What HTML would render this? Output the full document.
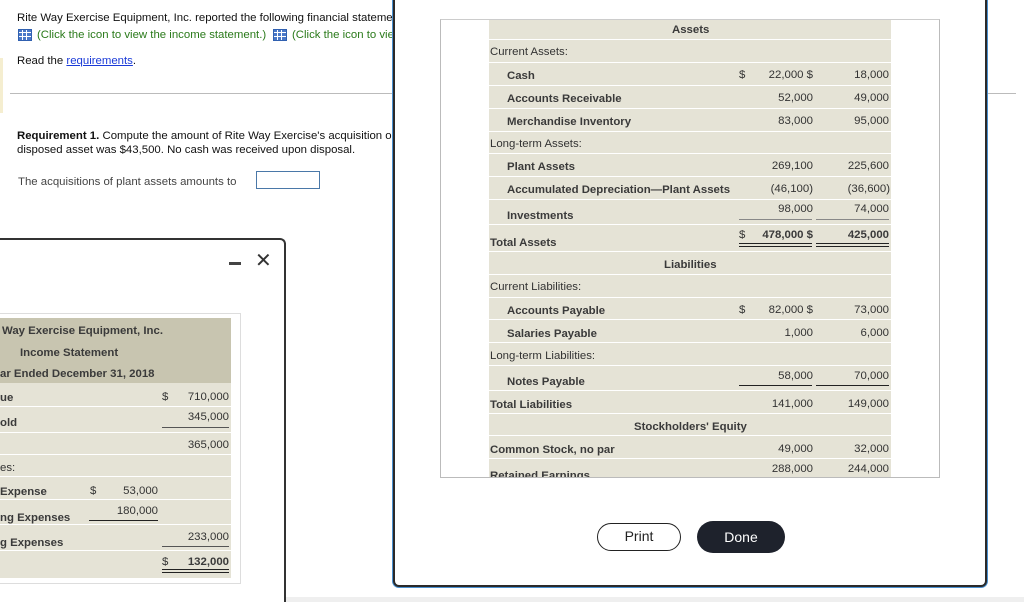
<!DOCTYPE html>
<html style="overflow:hidden;width:1024px;height:602px"><head><meta charset="utf-8"><style>
*{margin:0;padding:0;box-sizing:border-box}
body{width:1024px;height:602px;position:relative;overflow:hidden;background:#fff;font-family:"Liberation Sans",Arial,sans-serif;color:#222}
.t{position:absolute;white-space:nowrap;font-size:11.4px;line-height:14px}
.b{font-weight:bold;color:#3a3a3a}
.r{text-align:right}
.n{color:#333}
.row{position:absolute;background:#e5e3d6;border-bottom:1px solid #fff}
.ul{position:absolute;height:1px;background:#555}
.dul{position:absolute;height:4px;border-top:1px solid #222;border-bottom:1px solid #222}
.wl{position:absolute;left:489px;width:402px;height:1px;background:#fff}
.ic{position:absolute;width:14px;height:12px;border:1px solid #3060b0;background:#4a78c8;background-image:linear-gradient(90deg,transparent 3px,#fff 3px,#fff 4px,transparent 4px,transparent 7px,#fff 7px,#fff 8px,transparent 8px),linear-gradient(transparent 2px,#fff 2px,#fff 3px,transparent 3px,transparent 6px,#fff 6px,#fff 7px,transparent 7px)}
</style></head><body>
<div class="t" style="left:17px;top:11px;color:#111">Rite Way Exercise Equipment, Inc. reported the following financial stateme</div>
<div class="ic" style="left:18px;top:29px"></div>
<div class="t" style="left:37px;top:28px;color:#2a7a1a">(Click the icon to view the income statement.)</div>
<div class="ic" style="left:273px;top:29px"></div>
<div class="t" style="left:292px;top:28px;color:#2a7a1a">(Click the icon to vie</div>
<div class="t" style="left:17px;top:54px;color:#111">Read the <span style="color:#1a3ad8;text-decoration:underline">requirements</span>.</div>
<div style="position:absolute;left:0;top:58px;width:3px;height:55px;background:#f5eed0"></div>
<div style="position:absolute;left:10px;top:93px;width:383px;height:1px;background:#bbb"></div>
<div style="position:absolute;left:988px;top:93px;width:28px;height:1px;background:#bbb"></div>
<div class="t" style="left:17px;top:129px;color:#111"><b>Requirement 1.</b> Compute the amount of Rite Way Exercise's acquisition o</div>
<div class="t" style="left:17px;top:143px;color:#111">disposed asset was $43,500. No cash was received upon disposal.</div>
<div class="t" style="left:18px;top:175px;color:#444">The acquisitions of plant assets amounts to</div>
<div style="position:absolute;left:256px;top:171px;width:64px;height:18px;border:1px solid #4a78a8"></div>
<div style="position:absolute;left:0;top:597px;width:1024px;height:5px;background:#efefef"></div>

<!-- left modal -->
<div style="position:absolute;left:-10px;top:238px;width:296px;height:364px;border:2px solid #333;border-bottom:none;border-radius:6px 6px 0 0;background:#fff"></div>
<div style="position:absolute;left:229px;top:262px;width:12px;height:3px;background:#444"></div>
<div class="t" style="left:255px;top:250px;font-size:20px;line-height:22px;color:#333">✕</div>
<div style="position:absolute;left:0;top:313px;width:241px;height:271px;border:1px solid #ddd;border-left:none"></div>
<div style="position:absolute;left:0;top:318px;width:231px;height:65px;background:#c8c5b0"></div>
<div class="row" style="left:0;top:383px;width:231px;height:24px"></div>
<div class="row" style="left:0;top:407px;width:231px;height:26px"></div>
<div class="row" style="left:0;top:433px;width:231px;height:22px"></div>
<div class="row" style="left:0;top:455px;width:231px;height:22px"></div>
<div class="row" style="left:0;top:477px;width:231px;height:23px"></div>
<div class="row" style="left:0;top:500px;width:231px;height:25px"></div>
<div class="row" style="left:0;top:525px;width:231px;height:26px"></div>
<div class="row" style="left:0;top:551px;width:231px;height:27px;border:none"></div>
<div class="t b" style="left:2px;top:324px">Way Exercise Equipment, Inc.</div>
<div class="t b" style="left:20px;top:346px">Income Statement</div>
<div class="t b" style="left:0;top:367px">ar Ended December 31, 2018</div>
<div class="t b" style="left:0;top:391px">ue</div>
<div class="t n" style="left:162px;top:390px">$</div><div class="t n r" style="left:170px;width:59px;top:390px">710,000</div>
<div class="t b" style="left:0;top:416px">old</div>
<div class="t n r" style="left:170px;width:59px;top:410px">345,000</div><div class="ul" style="left:162px;top:427px;width:67px"></div>
<div class="t n r" style="left:170px;width:59px;top:438px">365,000</div>
<div class="t n" style="left:0;top:461px">es:</div>
<div class="t b" style="left:0;top:485px">Expense</div>
<div class="t n" style="left:90px;top:484px">$</div><div class="t n r" style="left:100px;width:58px;top:484px">53,000</div>
<div class="t b" style="left:0;top:511px">ng Expenses</div>
<div class="t n r" style="left:100px;width:58px;top:504px">180,000</div><div class="ul" style="left:89px;top:520px;width:69px;background:#222"></div>
<div class="t b" style="left:0;top:536px">g Expenses</div>
<div class="t n r" style="left:170px;width:59px;top:530px">233,000</div><div class="ul" style="left:162px;top:546px;width:67px"></div>
<div class="t n" style="left:162px;top:555px">$</div><div class="t b r" style="left:170px;width:59px;top:555px">132,000</div>
<div class="dul" style="left:162px;top:569px;width:67px"></div>

<!-- right modal -->
<div style="position:absolute;left:393px;top:-10px;width:594px;height:597px;border:2px solid #2a2a2a;border-radius:6px;background:#fff;box-shadow:0 0 0 1px #4a90d0"></div>
<div style="position:absolute;left:440px;top:19px;width:500px;height:459px;border:1px solid #bbb;border-top:1px solid #ccc"></div>
<div style="position:absolute;left:489px;top:20px;width:402px;height:457px;background:#e5e3d6"></div>
<div class="wl" style="top:39px"></div><div class="wl" style="top:62px"></div><div class="wl" style="top:85px"></div>
<div class="wl" style="top:108px"></div><div class="wl" style="top:131px"></div><div class="wl" style="top:153px"></div>
<div class="wl" style="top:176px"></div><div class="wl" style="top:199px"></div><div class="wl" style="top:224px"></div>
<div class="wl" style="top:251px"></div><div class="wl" style="top:274px"></div><div class="wl" style="top:297px"></div>
<div class="wl" style="top:319px"></div><div class="wl" style="top:342px"></div><div class="wl" style="top:365px"></div>
<div class="wl" style="top:390px"></div><div class="wl" style="top:413px"></div><div class="wl" style="top:435px"></div>
<div class="wl" style="top:458px"></div>

<div class="t b" style="left:672px;top:23px">Assets</div>
<div class="t n" style="left:490px;top:45px">Current Assets:</div>
<div class="t b" style="left:507px;top:69px">Cash</div>
<div class="t n" style="left:739px;top:68px">$</div><div class="t n r" style="left:745px;width:68px;top:68px">22,000 $</div><div class="t n r" style="left:830px;width:59px;top:68px">18,000</div>
<div class="t b" style="left:507px;top:92px">Accounts Receivable</div>
<div class="t n r" style="left:750px;width:63px;top:91px">52,000</div><div class="t n r" style="left:830px;width:59px;top:91px">49,000</div>
<div class="t b" style="left:507px;top:115px">Merchandise Inventory</div>
<div class="t n r" style="left:750px;width:63px;top:114px">83,000</div><div class="t n r" style="left:830px;width:59px;top:114px">95,000</div>
<div class="t n" style="left:490px;top:137px">Long-term Assets:</div>
<div class="t b" style="left:507px;top:160px">Plant Assets</div>
<div class="t n r" style="left:750px;width:63px;top:159px">269,100</div><div class="t n r" style="left:830px;width:59px;top:159px">225,600</div>
<div class="t b" style="left:507px;top:183px">Accumulated Depreciation—Plant Assets</div>
<div class="t n r" style="left:750px;width:63px;top:182px">(46,100)</div><div class="t n r" style="left:830px;width:60px;top:182px">(36,600)</div>
<div class="t b" style="left:507px;top:209px">Investments</div>
<div class="t n r" style="left:750px;width:63px;top:202px">98,000</div><div class="t n r" style="left:830px;width:59px;top:202px">74,000</div>
<div class="ul" style="left:739px;top:219px;width:73px;background:#888"></div><div class="ul" style="left:816px;top:219px;width:73px;background:#888"></div>
<div class="t b" style="left:490px;top:236px">Total Assets</div>
<div class="t n" style="left:739px;top:228px">$</div><div class="t b r" style="left:745px;width:68px;top:228px">478,000 $</div><div class="t b r" style="left:830px;width:59px;top:228px">425,000</div>
<div class="dul" style="left:739px;top:243px;width:73px"></div><div class="dul" style="left:816px;top:243px;width:73px"></div>
<div class="t b" style="left:664px;top:258px">Liabilities</div>
<div class="t n" style="left:490px;top:280px">Current Liabilities:</div>
<div class="t b" style="left:507px;top:304px">Accounts Payable</div>
<div class="t n" style="left:739px;top:303px">$</div><div class="t n r" style="left:745px;width:68px;top:303px">82,000 $</div><div class="t n r" style="left:830px;width:59px;top:303px">73,000</div>
<div class="t b" style="left:507px;top:327px">Salaries Payable</div>
<div class="t n r" style="left:750px;width:63px;top:326px">1,000</div><div class="t n r" style="left:830px;width:59px;top:326px">6,000</div>
<div class="t n" style="left:490px;top:349px">Long-term Liabilities:</div>
<div class="t b" style="left:507px;top:375px">Notes Payable</div>
<div class="t n r" style="left:750px;width:63px;top:369px">58,000</div><div class="t n r" style="left:830px;width:59px;top:369px">70,000</div>
<div class="ul" style="left:739px;top:385px;width:73px;background:#222"></div><div class="ul" style="left:816px;top:385px;width:73px;background:#222"></div>
<div class="t b" style="left:490px;top:398px">Total Liabilities</div>
<div class="t n r" style="left:750px;width:63px;top:397px">141,000</div><div class="t n r" style="left:830px;width:59px;top:397px">149,000</div>
<div class="t b" style="left:634px;top:420px">Stockholders' Equity</div>
<div class="t b" style="left:490px;top:443px">Common Stock, no par</div>
<div class="t n r" style="left:750px;width:63px;top:442px">49,000</div><div class="t n r" style="left:830px;width:59px;top:442px">32,000</div>
<div style="position:absolute;left:489px;top:459px;width:402px;height:18px;overflow:hidden">
<div class="t b" style="left:1px;top:10px">Retained Earnings</div>
<div class="t n r" style="left:261px;width:63px;top:3px">288,000</div><div class="t n r" style="left:341px;width:59px;top:3px">244,000</div>
</div>
<div style="position:absolute;left:597px;top:523px;width:84px;height:28px;border:1.5px solid #222;border-radius:14px;font-size:14px;line-height:25px;text-align:center;color:#222">Print</div>
<div style="position:absolute;left:697px;top:521px;width:88px;height:32px;background:#1e222c;border-radius:16px;font-size:14px;line-height:32px;text-align:center;color:#fff">Done</div>
</body></html>
